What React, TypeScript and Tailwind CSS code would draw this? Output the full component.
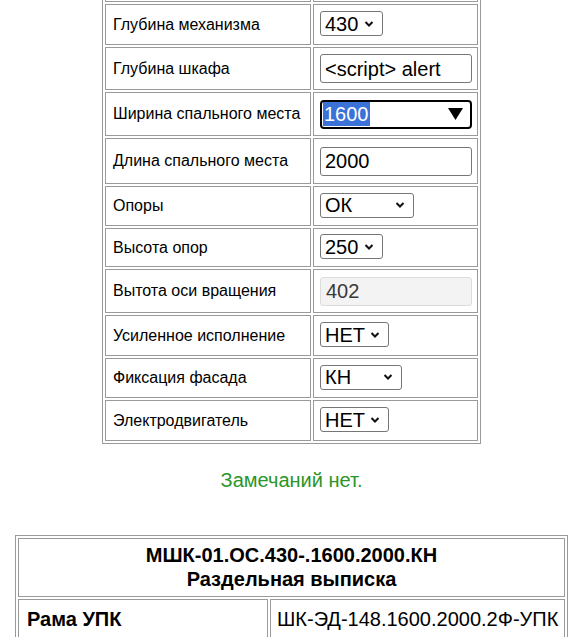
import React from 'react';

const Chevron = () => (
  <svg className="absolute right-[8px] top-1/2 -translate-y-1/2" width="10" height="7" viewBox="0 0 10 7">
    <path d="M1.5 1.5 L5 5 L8.5 1.5" fill="none" stroke="#111" strokeWidth="2" />
  </svg>
);

function Select({ value, className }: { value: string; className: string }) {
  return (
    <div className={'relative inline-flex h-[25px] items-center rounded-[3px] border border-[#767676] bg-white pl-[4px] text-[20px] leading-none text-black ' + className}>
      <span>{value}</span>
      <Chevron />
    </div>
  );
}

function TextInput({ value, disabled }: { value: string; disabled?: boolean }) {
  return (
    <input
      readOnly
      disabled={disabled}
      value={value}
      className={
        disabled
          ? 'h-[29px] w-[152px] rounded-[3px] border border-[#dcdcdc] bg-[#f3f3f3] px-[5px] text-[20px] text-[#3a3a3a] outline-none'
          : 'h-[29px] w-[152px] rounded-[3px] border border-[#767676] bg-white px-[4px] text-[20px] text-black outline-none'
      }
    />
  );
}

const FocusedSelect = () => (
  <div className="relative flex h-[29px] w-[152px] items-center rounded-[4px] border-2 border-black bg-white pl-[1px] text-[20px] leading-none">
    <span className="bg-[#3a72d8] px-px py-[2px] text-white">1600</span>
    <svg className="absolute right-[7px] top-1/2 -translate-y-1/2" width="15" height="12" viewBox="0 0 15 12">
      <path d="M0 0 H15 L7.5 12 Z" fill="#000" />
    </svg>
  </div>
);

type Row = { label: string; h: string; field: React.ReactNode };

const rows: Row[] = [
  { label: 'Глубина механизма', h: 'h-[41px]', field: <Select value="430" className="w-[63px]" /> },
  { label: 'Глубина шкафа', h: 'h-[43px]', field: <TextInput value="<script> alert" /> },
  { label: 'Ширина спального места', h: 'h-[44px]', field: <FocusedSelect /> },
  { label: 'Длина спального места', h: 'h-[46px]', field: <TextInput value="2000" /> },
  { label: 'Опоры', h: 'h-[40px]', field: <Select value="ОК" className="w-[94px]" /> },
  { label: 'Высота опор', h: 'h-[39px]', field: <Select value="250" className="w-[63px]" /> },
  { label: 'Вытота оси вращения', h: 'h-[44px]', field: <TextInput value="402" disabled /> },
  { label: 'Усиленное исполнение', h: 'h-[41px]', field: <Select value="НЕТ" className="w-[69px]" /> },
  { label: 'Фиксация фасада', h: 'h-[40px]', field: <Select value="КН" className="w-[82px]" /> },
  { label: 'Электродвигатель', h: 'h-[41px]', field: <Select value="НЕТ" className="w-[69px]" /> },
];

export default function App() {
  return (
    <div className="min-h-[637px] w-full bg-white font-['Liberation_Sans',Arial,sans-serif] text-black">
      {/* form, scrolled so the row above is just out of view */}
      <table className="mx-auto -mt-[41px] border-separate border-spacing-[2px] border border-[#9a9a9a]">
        <tbody>
          <tr>
            <td className="h-[40px] w-[206px] border border-[#9a9a9a] p-0" />
            <td className="h-[40px] w-[165px] border border-[#9a9a9a] p-0" />
          </tr>
          {rows.map((r) => (
            <tr key={r.label}>
              <td className={'w-[206px] border border-[#9a9a9a] p-0 pl-[7px] align-middle text-[16px] ' + r.h}>{r.label}</td>
              <td className={'w-[165px] border border-[#9a9a9a] p-0 pl-[6px] align-middle ' + r.h}>{r.field}</td>
            </tr>
          ))}
        </tbody>
      </table>

      <p className="mt-[25px] text-center text-[20px] leading-[23px] text-[#2a962a]">Замечаний нет.</p>

      {/* spec */}
      <table className="mx-auto mt-[43px] w-[553px] border-separate border-spacing-[2px] border border-[#9a9a9a]">
        <tbody>
          <tr>
            <td colSpan={2} className="h-[59px] border border-[#9a9a9a] p-0 pb-[2px] text-center align-middle text-[20px] font-bold leading-[24px]">
              МШК-01.ОС.430-.1600.2000.КН
              <br />
              Раздельная выписка
            </td>
          </tr>
          <tr>
            <td className="h-[40px] w-[250px] border border-[#9a9a9a] p-0 pl-[8px] align-middle text-[20px] font-bold">Рама УПК</td>
            <td className="h-[40px] border border-[#9a9a9a] p-0 pl-[6px] align-middle text-[20px]">ШК-ЭД-148.1600.2000.2Ф-УПК</td>
          </tr>
        </tbody>
      </table>
    </div>
  );
}
